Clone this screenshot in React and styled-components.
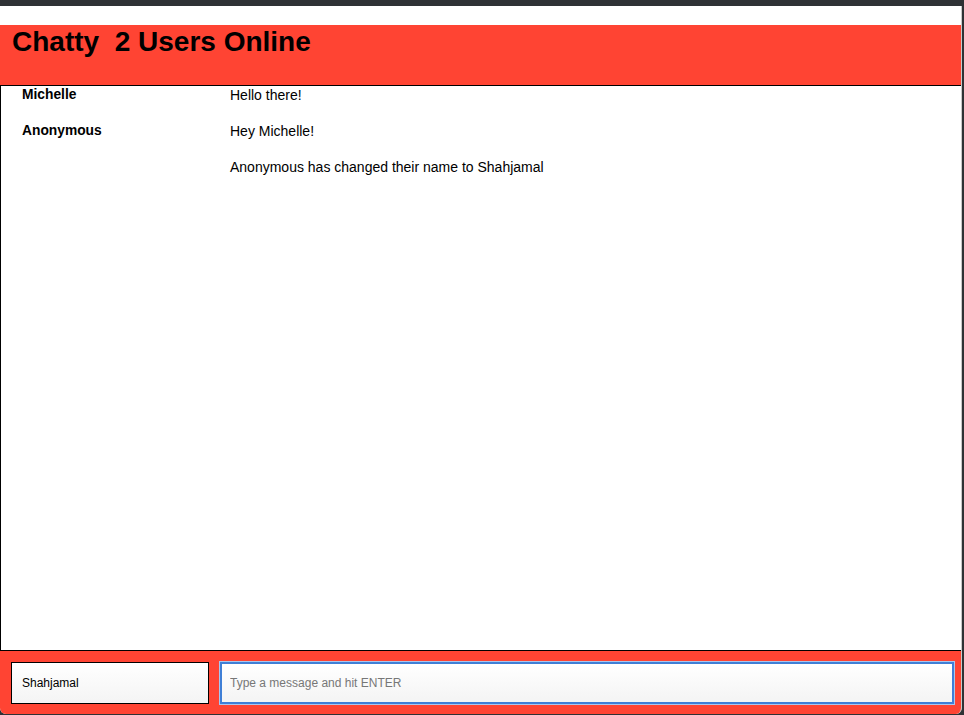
import React from "react";
import styled, { createGlobalStyle } from "styled-components";

const GlobalStyle = createGlobalStyle`
  html, body {
    margin: 0;
    padding: 0;
    background: #2f3235;
  }
  body {
    font-family: "Liberation Sans", Arial, Helvetica, sans-serif;
  }
`;

const Window = styled.div`
  width: 964px;
  height: 715px;
  display: flex;
  flex-direction: column;
  background: #2f3235;
  overflow: hidden;
`;

const Page = styled.div`
  flex: 1;
  margin-top: 6px;
  margin-right: 2px;
  margin-bottom: 1px;
  display: flex;
  flex-direction: column;
  background: #ffffff;
  border-right: 1px solid #c9c9c9;
  border-radius: 0 0 6px 6px;
  overflow: hidden;
`;

const Spacer = styled.div`
  height: 19px;
  background: #ffffff;
`;

const Navbar = styled.nav`
  height: 60px;
  background: #ff4433;
  border-bottom: 1px solid #000;
  padding: 0 12px;
`;

const Brand = styled.h1`
  margin: 0;
  padding-top: 1px;
  font-size: 28px;
  line-height: 32px;
  font-weight: bold;
  color: #000;
  white-space: pre;
`;

const Messages = styled.main`
  flex: 1;
  border-left: 1px solid #000;
  padding-top: 1px;
  font-size: 14px;
  color: #000;
`;

const Message = styled.div`
  display: flex;
  height: 36px;
  line-height: 16px;
`;

const Username = styled.span`
  width: 208px;
  padding-left: 21px;
  font-weight: bold;
  font-size: 13.8px;
  flex-shrink: 0;
`;

const Content = styled.span`
  flex: 1;
`;

const ChatBar = styled.footer`
  height: 63px;
  background: #ff4433;
  border-top: 1px solid #000;
  display: flex;
  align-items: center;
  padding: 0 7px 0 11px;
  gap: 11px;
`;

const Input = styled.input`
  height: 42px;
  box-sizing: border-box;
  font-family: "Liberation Sans", Arial, Helvetica, sans-serif;
  font-size: 12px;
  color: #000;
  background: linear-gradient(#ffffff, #f4f4f4);
  outline: none;
  padding: 0 10px;
  margin: 0;

  &::placeholder {
    color: #777;
  }
`;

const NameInput = styled(Input)`
  width: 198px;
  border: 1px solid #000;
`;

const MessageInput = styled(Input)`
  flex: 1;
  border: 2px solid #3f7fd6;
  box-shadow: 0 0 0 1px #a9c6ee;
  padding-left: 8px;
`;

const messages = [
  { username: "Michelle", content: "Hello there!" },
  { username: "Anonymous", content: "Hey Michelle!" },
  { username: "", content: "Anonymous has changed their name to Shahjamal" },
];

export default function App() {
  return (
    <Window>
      <GlobalStyle />
      <Page>
        <Spacer />
        <Navbar>
          <Brand>{"Chatty  2 Users Online"}</Brand>
        </Navbar>
        <Messages>
          {messages.map((m, i) => (
            <Message key={i}>
              <Username>{m.username}</Username>
              <Content>{m.content}</Content>
            </Message>
          ))}
        </Messages>
        <ChatBar>
          <NameInput defaultValue="Shahjamal" />
          <MessageInput placeholder="Type a message and hit ENTER" autoFocus />
        </ChatBar>
      </Page>
    </Window>
  );
}
